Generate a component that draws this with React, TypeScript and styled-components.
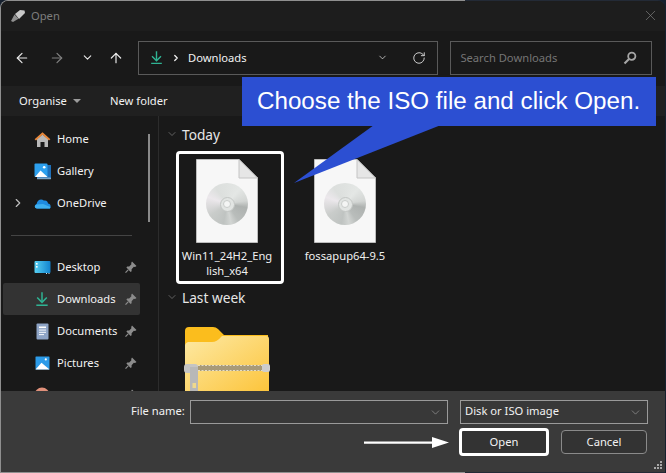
import { ReactNode } from "react";
import styled, { createGlobalStyle } from "styled-components";
import { ArrowLeft, ArrowRight, ArrowUp, ChevronDown, ChevronRight, RotateCw, X } from "lucide-react";

const Global = createGlobalStyle`
  html, body { margin: 0; padding: 0; background: #16202e; }
  * { box-sizing: border-box; }
  body { font-family: "Noto Sans", "Open Sans", sans-serif; font-size: 11.2px; color: #f2f2f2; }
`;

const Page = styled.div`
  position: relative;
  width: 666px;
  height: 473px;
  overflow: hidden;
`;

const Frame = styled.div`
  width: 665px;
  height: 473px;
  padding: 1px 0 1px 1px;
  border-radius: 8px 8px 0 0;
  background: linear-gradient(90deg, #8f8f8f 0, #8f8f8f 70%, #232a36 70%);
`;

const Window = styled.div`
  height: 100%;
  display: flex;
  flex-direction: column;
  overflow: hidden;
  border-radius: 7px 7px 0 0;
  background: #191919;
`;

const TitleBar = styled.div`
  height: 30px;
  flex: none;
  display: flex;
  align-items: center;
  padding: 0 6px 1px 9px;
  background: #1d1d1d;
  color: #7d7d7d;
`;

const TitleText = styled.span`
  margin-left: 5px;
  flex: 1;
`;

const NavBar = styled.div`
  height: 55px;
  flex: none;
  display: flex;
  align-items: center;
  padding: 0 13px 2px 4px;
  background: #191919;
`;

const NavButton = styled.div<{ $w: number; $dim?: boolean }>`
  width: ${(p) => p.$w}px;
  flex: none;
  display: flex;
  justify-content: center;
  color: ${(p) => (p.$dim ? "#808080" : "#e8e8e8")};
`;

const Field = styled.div`
  height: 34px;
  display: flex;
  align-items: center;
  border: 1px solid #5a5a5a;
  background: #191919;
`;

const AddressBox = styled(Field)`
  width: 301px;
  margin-left: 6px;
  padding: 0 11px 0 10px;
`;

const Crumb = styled.span`
  flex: 1;
  margin-left: 7px;
  color: #f2f2f2;
`;

const SearchBox = styled(Field)`
  width: 202px;
  margin-left: 12px;
  padding: 0 14px 0 9px;
  justify-content: space-between;
  color: #757575;
`;

const Toolbar = styled.div`
  height: 30px;
  flex: none;
  display: flex;
  align-items: center;
  padding: 0 0 2px 18px;
  background: #202020;
`;

const ToolItem = styled.span`
  display: flex;
  align-items: center;
  gap: 6px;
  width: 91px;
`;

const Caret = styled.i`
  width: 0;
  height: 0;
  margin-top: 1px;
  border: 4px solid transparent;
  border-top: 4px solid #9c9c9c;
  border-bottom: 0;
`;

const Main = styled.div`
  height: 275px;
  flex: none;
  display: flex;
  overflow: hidden;
  background: #191919;
`;

const Sidebar = styled.div`
  position: relative;
  width: 158px;
  flex: none;
  padding-top: 7px;
  border-right: 1px solid #2c2c2c;
`;

const SideScroll = styled.div`
  position: absolute;
  left: 147px;
  top: 18px;
  width: 2px;
  height: 88px;
  background: #8a8a8a;
`;

const SideRow = styled.div<{ $active?: boolean }>`
  height: 32px;
  width: 137px;
  margin-left: 2px;
  display: flex;
  align-items: center;
  border-radius: 2px;
  background: ${(p) => (p.$active ? "#333333" : "transparent")};
`;

const Expander = styled.span`
  width: 30px;
  flex: none;
  display: flex;
  justify-content: center;
  color: #bdbdbd;
`;

const SideIcon = styled.span`
  width: 18px;
  height: 18px;
  flex: none;
  display: flex;
  align-items: center;
  justify-content: center;
`;

const SideLabel = styled.span`
  margin-left: 6px;
  padding-bottom: 2px;
  flex: 1;
  white-space: nowrap;
`;

const PinSlot = styled.span`
  width: 18px;
  flex: none;
  display: flex;
  justify-content: center;
`;

const SideDivider = styled.div`
  height: 32px;
  display: flex;
  align-items: center;
  padding-left: 10px;
  &::before {
    content: "";
    width: 121px;
    height: 1px;
    background: #444444;
  }
`;

const Content = styled.div`
  flex: 1;
  padding: 9px 0 0 7px;
  overflow: hidden;
`;

const GroupHeader = styled.div`
  height: 20px;
  display: flex;
  align-items: center;
  gap: 4px;
  padding-bottom: 2px;
  font-size: 13.7px;
  color: #e6e6e6;
`;

const Tiles = styled.div`
  display: flex;
  gap: 10px;
  margin: 6px 0 0 10px;
`;

const Tile = styled.div<{ $selected?: boolean }>`
  width: 108px;
  height: 133px;
  padding: 5px 6px 0 0;
  display: flex;
  flex-direction: column;
  align-items: center;
  border: 3px solid ${(p) => (p.$selected ? "#ffffff" : "transparent")};
  border-radius: 4px;
`;

const TileName = styled.div`
  margin-top: 5px;
  line-height: 15px;
  text-align: center;
  white-space: nowrap;
  color: #f0f0f0;
`;

const FileShape = styled.div`
  position: relative;
  width: 62px;
  height: 84px;
`;

const DiscSurface = styled.div`
  position: absolute;
  left: 10px;
  top: 24px;
  width: 42px;
  height: 42px;
  display: flex;
  align-items: center;
  justify-content: center;
  border-radius: 50%;
  background: conic-gradient(
    #dfe2e0 0deg,
    #e4e7e5 40deg,
    #d3d6d4 80deg,
    #aeb2b0 100deg,
    #b9bdbb 145deg,
    #d2d5d3 168deg,
    #bfc3c1 190deg,
    #c9ccca 235deg,
    #ece8ec 290deg,
    #dcdfdd 325deg,
    #dfe2e0 360deg
  );
`;

const DiscHub = styled.div`
  width: 15px;
  height: 15px;
  display: flex;
  align-items: center;
  justify-content: center;
  border-radius: 50%;
  border: 1px solid #c3c6c4;
  background: #e2e5e3;
  &::after {
    content: "";
    width: 6px;
    height: 6px;
    border-radius: 50%;
    border: 1px solid #c9ccca;
    background: #f4f5f4;
  }
`;

const LastWeek = styled(GroupHeader)`
  margin-top: 4px;
`;

const ZipWrap = styled.div`
  margin: 19px 0 0 18px;
`;

const Footer = styled.div`
  flex: 1;
  display: flex;
  flex-direction: column;
  gap: 4px;
  padding: 9px 0 0 130px;
  background: #3a3a3a;
  position: relative;
`;

const FooterRow = styled.div`
  display: flex;
  align-items: center;
`;

const FooterLabel = styled.span`
  width: 59px;
  padding-bottom: 3px;
`;

const Combo = styled.div<{ $w: number; $gap?: number }>`
  width: ${(p) => p.$w}px;
  height: 24px;
  margin-left: ${(p) => p.$gap ?? 0}px;
  display: flex;
  align-items: center;
  justify-content: space-between;
  padding: 0 5px 0 4px;
  border: 1px solid #9a9a9a;
  background: #383838;
  color: #b5b5b5;
`;

const ComboText = styled.span`
  padding-bottom: 3px;
  color: #f2f2f2;
`;

const Buttons = styled.div`
  display: flex;
  align-items: center;
  gap: 12px;
  margin-left: 328px;
`;

const DialogButton = styled.div<{ $primary?: boolean }>`
  width: ${(p) => (p.$primary ? 90 : 86)}px;
  height: ${(p) => (p.$primary ? 28 : 24)}px;
  display: flex;
  align-items: center;
  justify-content: center;
  padding-bottom: 2px;
  border-radius: 4px;
  background: #333333;
  border: ${(p) => (p.$primary ? "3px solid #ffffff" : "1px solid #8a8a8a")};
`;

const Grip = styled.svg`
  position: absolute;
  right: 2px;
  bottom: 2px;
`;

const Callout = styled.div`
  position: absolute;
  left: 242px;
  top: 77px;
  width: 414px;
  height: 49px;
  display: flex;
  align-items: center;
  padding: 0 0 2px 15px;
  background: #2c4fd2;
  font-family: "Liberation Sans", Arial, sans-serif;
  font-size: 24.2px;
  color: #ffffff;
  white-space: nowrap;
`;

const CalloutTail = styled.svg`
  position: absolute;
  left: 290px;
  top: 125px;
`;

const FlowArrow = styled.svg`
  position: absolute;
  left: 364px;
  top: 435px;
`;

const Pin = () => (
  <svg width="14" height="14" viewBox="0 0 14 14">
    <path d="M8 1.5 L12.5 6 L11 7 L9.8 6.8 L7.6 9.2 L7.6 11.2 L6.6 12 L2.4 7.6 L3.2 6.6 L5.2 6.6 L7.4 4.2 L7.2 3 Z" fill="#8c8c8c" />
    <path d="M4.2 9.8 L1.5 12.7" stroke="#8c8c8c" strokeWidth="1.2" />
  </svg>
);

const DownloadIcon = ({ size = 18 }: { size?: number }) => (
  <svg width={size} height={size} viewBox="0 0 18 18" fill="none" stroke="#2fb393" strokeWidth="1.7">
    <path d="M9 1.5 V12.2" />
    <path d="M3.6 7.4 L9 12.8 L14.4 7.4" />
    <path d="M2.6 16 H15.4" />
  </svg>
);

const HomeIcon = () => (
  <svg width="17" height="17" viewBox="0 0 17 17">
    <path d="M3 8 L8.5 3.5 L14 8 V16 H10.5 V11 H6.5 V16 H3 Z" fill="#b9b9b9" />
    <path d="M0.6 8.2 L8.5 1.2 L16.4 8.2 L15 9.4 L8.5 3.8 L2 9.4 Z" fill="#e8873a" />
  </svg>
);

const GalleryIcon = () => (
  <svg width="17" height="17" viewBox="0 0 17 17">
    <rect x="3" y="2" width="14" height="13" fill="#1e6fb8" />
    <rect x="3" y="14.5" width="14" height="1.8" rx="0.6" fill="#7fa6c6" />
    <rect x="0.5" y="0.5" width="13" height="13.5" rx="1" fill="#2da0ee" />
    <path d="M1 14 L6.5 7.5 L13.5 14 Z" fill="#ffffff" />
    <circle cx="10.2" cy="4.2" r="1.3" fill="#ffffff" />
  </svg>
);

const CloudIcon = () => (
  <svg width="17" height="12" viewBox="0 0 17 12">
    <path d="M3 11.5 C0.4 11.5 0 7.8 2.6 7 C3 3.4 7 1.2 9.8 3.6 C12.4 2.8 14 4.8 14 6.5 C16 6.5 17.6 9 16 11.5 Z" fill="#1f8be0" />
    <path d="M3 11.5 C0.4 11.5 0 8.4 2.6 7.5 L9 7 L16.4 10 C16.2 10.8 16 11.2 15.8 11.5 Z" fill="#3fb0f0" />
  </svg>
);

const DesktopIcon = () => (
  <svg width="17" height="15" viewBox="0 0 17 15">
    <defs>
      <linearGradient id="desk" x1="0" y1="0" x2="1" y2="0">
        <stop offset="0" stopColor="#57d0f2" />
        <stop offset="1" stopColor="#1283cf" />
      </linearGradient>
    </defs>
    <rect x="0.5" y="1" width="16" height="12" rx="1" fill="url(#desk)" />
    <rect x="2" y="3" width="1.6" height="1.6" fill="#ffffff" />
    <rect x="2" y="6" width="1.6" height="1.6" fill="#ffffff" />
    <rect x="12" y="13" width="1" height="1" fill="#cfe9f7" />
    <rect x="14.5" y="13" width="1" height="1" fill="#cfe9f7" />
  </svg>
);

const DocumentsIcon = () => (
  <svg width="13" height="17" viewBox="0 0 13 17">
    <rect x="0.5" y="0.5" width="12" height="16" rx="1" fill="#8ea4c6" />
    <rect x="3" y="3.5" width="7" height="1.6" fill="#ffffff" />
    <rect x="3" y="6.5" width="7" height="1.1" fill="#eef2f8" />
    <rect x="3" y="8.8" width="7" height="1.1" fill="#eef2f8" />
    <rect x="3" y="11" width="5" height="1.1" fill="#eef2f8" />
  </svg>
);

const PicturesIcon = () => (
  <svg width="15" height="14" viewBox="0 0 15 14">
    <rect x="0.5" y="0.5" width="14" height="13" rx="0.6" fill="#2c9be8" />
    <path d="M0.5 13.5 L6.5 6.8 L14.5 13.5 Z" fill="#ffffff" />
    <circle cx="10.8" cy="3.4" r="1.1" fill="#ffffff" />
  </svg>
);

const MusicIcon = () => (
  <svg width="16" height="16" viewBox="0 0 16 16">
    <circle cx="8" cy="8" r="7.5" fill="#e0907a" />
  </svg>
);

const DiscFile = () => (
  <FileShape>
    <svg width="62" height="84" viewBox="0 0 62 84">
      <path d="M0.5 0.5 H43 L61.5 19 V83.5 H0.5 Z" fill="#f7f7f7" stroke="#bdbdbd" />
      <path d="M43 0.5 V19 H61.5 Z" fill="#e6e6e6" stroke="#c4c4c4" />
    </svg>
    <DiscSurface>
      <DiscHub />
    </DiscSurface>
  </FileShape>
);

const ZipFolder = () => (
  <svg width="86" height="66" viewBox="0 0 86 66" style={{ display: "block" }}>
    <defs>
      <linearGradient id="zipBody" x1="0" y1="0" x2="1" y2="1">
        <stop offset="0" stopColor="#fde9a4" />
        <stop offset="1" stopColor="#fcc43a" />
      </linearGradient>
    </defs>
    <path d="M1 4 Q1 0 5 0 H29 Q32 0 34 2 L40 8 H84 V30 H1 Z" fill="#fbbd1d" />
    <path d="M1 19 Q1 16 4 15 H28 Q33 15 37 10 L38 9 H82 Q85 9 85 12 V66 H1 Z" fill="url(#zipBody)" />
    <rect x="14" y="38" width="66" height="6" fill="#a89a78" />
    <path d="M14 38.5 h66 M14 43.5 h66" stroke="#e2dcc8" strokeWidth="1" strokeDasharray="2 1.5" />
    <rect x="0" y="37" width="14" height="9" rx="3" fill="#c4c4c4" />
    <rect x="78" y="37" width="8" height="8" rx="2" fill="#cdcdcd" />
    <rect x="6" y="40" width="8" height="26" fill="#b8b8b8" />
    <rect x="8.5" y="56" width="3.5" height="5" fill="#f0d98c" />
  </svg>
);

const SearchGlyph = () => (
  <svg width="14" height="14" viewBox="0 0 14 14" fill="none" stroke="#a6a6a6">
    <circle cx="8.8" cy="5.2" r="3.6" strokeWidth="1.8" />
    <path d="M6 8 L1.5 12.5" strokeWidth="2.2" />
  </svg>
);

const TitleGlyph = () => (
  <svg width="16" height="14" viewBox="0 0 16 14">
    <path d="M5 5 L10 1 L14.5 1.5 L15 4 L9 10 Z" fill="#c9c9c9" />
    <path d="M1 12 L4.5 5.5 L8.5 9.8 L3 13 Z" fill="#8f8f8f" />
  </svg>
);

type Place = { label: string; icon: ReactNode; pinned?: boolean; active?: boolean; expand?: boolean };

const top: Place[] = [
  { label: "Home", icon: <HomeIcon /> },
  { label: "Gallery", icon: <GalleryIcon /> },
  { label: "OneDrive", icon: <CloudIcon />, expand: true },
];

const quick: Place[] = [
  { label: "Desktop", icon: <DesktopIcon />, pinned: true },
  { label: "Downloads", icon: <DownloadIcon size={16} />, pinned: true, active: true },
  { label: "Documents", icon: <DocumentsIcon />, pinned: true },
  { label: "Pictures", icon: <PicturesIcon />, pinned: true },
  { label: "Music", icon: <MusicIcon />, pinned: true },
];

const PlaceRow = ({ place }: { place: Place }) => (
  <SideRow $active={place.active}>
    <Expander>{place.expand && <ChevronRight size={14} strokeWidth={2} />}</Expander>
    <SideIcon>{place.icon}</SideIcon>
    <SideLabel>{place.label}</SideLabel>
    <PinSlot>{place.pinned && <Pin />}</PinSlot>
  </SideRow>
);

export default function App() {
  return (
    <Page>
      <Global />
      <Frame>
        <Window>
          <TitleBar>
            <TitleGlyph />
            <TitleText>Open</TitleText>
            <X size={17} strokeWidth={1} />
          </TitleBar>
          <NavBar>
            <NavButton $w={34}><ArrowLeft size={16} strokeWidth={1.8} /></NavButton>
            <NavButton $w={35} $dim><ArrowRight size={16} strokeWidth={1.8} /></NavButton>
            <NavButton $w={26}><ChevronDown size={13} strokeWidth={2} /></NavButton>
            <NavButton $w={32}><ArrowUp size={16} strokeWidth={1.8} /></NavButton>
            <AddressBox>
              <DownloadIcon size={15} />
              <ChevronRight size={10} strokeWidth={3} style={{ marginLeft: 7 }} />
              <Crumb>Downloads</Crumb>
              <ChevronDown size={11} strokeWidth={1.5} style={{ marginRight: 24 }} />
              <RotateCw size={14} strokeWidth={1.6} color="#d8d8d8" />
            </AddressBox>
            <SearchBox>
              <span>Search Downloads</span>
              <SearchGlyph />
            </SearchBox>
          </NavBar>
          <Toolbar>
            <ToolItem>Organise <Caret /></ToolItem>
            <ToolItem>New folder</ToolItem>
          </Toolbar>
          <Main>
            <Sidebar>
              <SideScroll />
              {top.map((p) => <PlaceRow key={p.label} place={p} />)}
              <SideDivider />
              {quick.map((p) => <PlaceRow key={p.label} place={p} />)}
            </Sidebar>
            <Content>
              <GroupHeader>
                <ChevronDown size={12} strokeWidth={1} color="#a8a8a8" />
                Today
              </GroupHeader>
              <Tiles>
                <Tile $selected>
                  <DiscFile />
                  <TileName>Win11_24H2_Eng<br />lish_x64</TileName>
                </Tile>
                <Tile>
                  <DiscFile />
                  <TileName>fossapup64-9.5</TileName>
                </Tile>
              </Tiles>
              <LastWeek>
                <ChevronDown size={12} strokeWidth={1} color="#a8a8a8" />
                Last week
              </LastWeek>
              <ZipWrap>
                <ZipFolder />
              </ZipWrap>
            </Content>
          </Main>
          <Footer>
            <FooterRow>
              <FooterLabel>File name:</FooterLabel>
              <Combo $w={258}>
                <span />
                <ChevronDown size={13} strokeWidth={1} />
              </Combo>
              <Combo $w={188} $gap={12}>
                <ComboText>Disk or ISO image</ComboText>
                <ChevronDown size={13} strokeWidth={1} />
              </Combo>
            </FooterRow>
            <Buttons>
              <DialogButton $primary>Open</DialogButton>
              <DialogButton>Cancel</DialogButton>
            </Buttons>
            <Grip width="9" height="9" viewBox="0 0 9 9" fill="#a8a8a8">
              <rect x="6" y="0" width="2" height="2" />
              <rect x="3" y="3" width="2" height="2" />
              <rect x="6" y="3" width="2" height="2" />
              <rect x="0" y="6" width="2" height="2" />
              <rect x="3" y="6" width="2" height="2" />
              <rect x="6" y="6" width="2" height="2" />
            </Grip>
          </Footer>
        </Window>
      </Frame>
      <CalloutTail width="152" height="60" viewBox="0 0 152 60">
        <path d="M84 0 L4 58 L151 0 Z" fill="#2c4fd2" />
      </CalloutTail>
      <Callout>Choose the ISO file and click Open.</Callout>
      <FlowArrow width="86" height="16" viewBox="0 0 86 16">
        <path d="M0 6.5 H68 V2 L85 7.5 L68 13 V8.8 H0 Z" fill="#ffffff" />
      </FlowArrow>
    </Page>
  );
}
